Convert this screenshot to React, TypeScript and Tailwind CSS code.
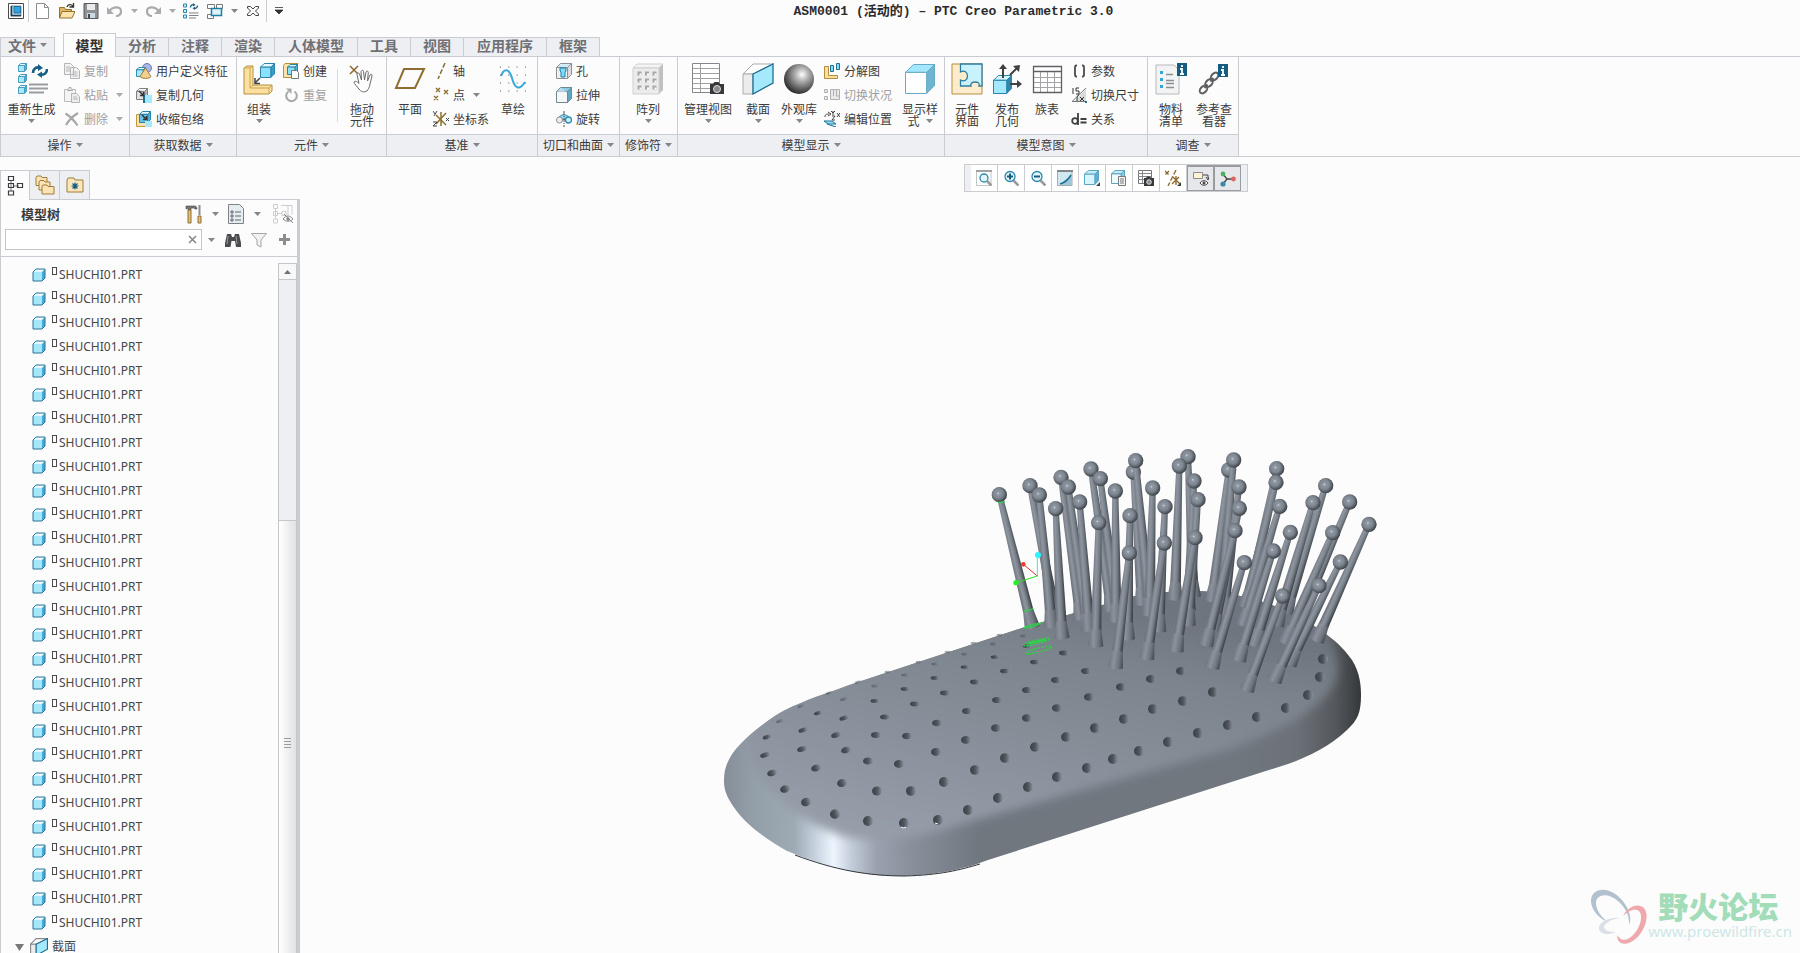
import React from 'react';

interface IconProps {
  size?: number;
  box?: number;
  children: React.ReactNode;
}

const Icon: React.FC<IconProps> = ({ size = 16, box, children }) => (
  <svg width={size} height={size} viewBox={`0 0 ${box ?? size} ${box ?? size}`} fill="none" aria-hidden="true" className="shrink-0">
    {children}
  </svg>
);

const Caret: React.FC<{ color?: string }> = ({ color = '#85868a' }) => (
  <svg width="7" height="4" viewBox="0 0 7 4" aria-hidden="true" className="shrink-0">
    <path d="M0 0h7L3.5 4z" fill={color} />
  </svg>
);

interface CubeProps {
  x?: number;
  y?: number;
  s?: number;
  front?: string;
  top?: string;
  side?: string;
  line?: string;
}

// A small isometric box, s is its outer size
const Cube: React.FC<CubeProps> = ({ x = 0, y = 0, s = 16, front = '#a8e8ff', top = '#e4f8ff', side = '#4fb0da', line = '#2a84aa' }) => {
  const d = s * 0.28;
  return (
    <g stroke={line} strokeWidth="1" strokeLinejoin="round" transform={`translate(${x} ${y})`}>
      <path d={`M.5 ${d}L${d} .5H${s - 0.5}L${s - d} ${d}z`} fill={top} />
      <path d={`M${s - d} ${d}L${s - 0.5} .5V${s - d}L${s - d} ${s - 0.5}z`} fill={side} />
      <path d={`M.5 ${d}H${s - d}V${s - 0.5}H.5z`} fill={front} />
    </g>
  );
};

const CycleArrows = () => (
  <g stroke="#176085" strokeWidth="2.6" fill="none">
    <path d="M2 9c0-4 3-6 6-5.500" />
    <path d="M16 5c0 4-3 6-6 5.500" />
    <path d="M7 0l5 4-5 3zM11 14l-5-3.500 5-3z" fill="#176085" stroke="none" />
  </g>
);

const icons = {
  regenerate: (
    <Icon size={32}>
      <Cube x={2} y={0} s={9} line="#4a9dbd" />
      <Cube x={2} y={11} s={9} line="#4a9dbd" />
      <Cube x={2} y={22} s={9} line="#4a9dbd" />
      <g transform="translate(15 1)"><CycleArrows /></g>
      <path d="M13 21.500h19M13 25.500h19M13 29.500h15" stroke="#9a9b9d" strokeWidth="2" />
    </Icon>
  ),
  copy: (
    <Icon>
      <path d="M.5.5h6l3 3v8h-9zM6.500 4.500h6l3 3v8h-9z" fill="#f2f2f2" stroke="#b4b5b7" />
      <path d="M2 4h4M2 6h4M2 8h4M8.500 9h5M8.500 11h5M8.500 13h5" stroke="#b4b5b7" />
    </Icon>
  ),
  paste: (
    <Icon>
      <path d="M.5 2.500h11v12H.5z" fill="#f4f4f4" stroke="#b9babc" />
      <path d="M3.500 3.500c0-1.500 1-1 1.500-3h2c.5 2 1.500 1.500 1.500 3z" fill="#e2e2e2" stroke="#a9aaac" />
      <path d="M7.500 6.500h5l3 3v6h-8z" fill="#eee" stroke="#b4b5b7" />
      <path d="M9 10h4M9 12h5" stroke="#b4b5b7" />
    </Icon>
  ),
  remove: (
    <Icon>
      <path d="M1.500 2.500c5 3 8 6 12 12M14 2C9 5 5 9 2 14" stroke="#a6a7a9" strokeWidth="2.200" />
    </Icon>
  ),
  udf: (
    <Icon>
      <circle cx="11" cy="5" r="4.500" fill="#aab5e6" stroke="#6d7ab0" />
      <Cube x={0} y={4} s={10} line="#2f8db3" />
      <path d="M9.500 5l5.500 8.500c-1.500 2.500-9 2.500-11 0z" fill="#f3d08e" stroke="#9c7c3e" />
    </Icon>
  ),
  copyGeom: (
    <Icon>
      <Cube x={0} y={1} s={12} front="#dfe0e2" top="#fff" side="#b5b6b8" line="#7d7e80" />
      <path d="M8 8h8v8H8z" fill="#a8e8ff" />
      <path d="M8 8v8" stroke="#1c6c90" strokeWidth="2" />
      <path d="M3 4l4 4M7.500 5v3.500H4" stroke="#333" strokeWidth="1.500" />
    </Icon>
  ),
  shrinkwrap: (
    <Icon>
      <path d="M.5 3.500h12v12H.5z" fill="#fbe3b0" stroke="#c2983c" />
      <Cube x={3} y={0} s={12} front="#68c2e4" />
      <path d="M9 10h7v6H9z" fill="#a8e8ff" />
      <path d="M6 4l4 4M10.500 5v3.500H7" stroke="#333" strokeWidth="1.500" />
    </Icon>
  ),
  assemble: (
    <Icon size={32}>
      <path d="M1 5l3-2h6v19h19v6l-3 3H1z" fill="#fbe0a0" stroke="#b58f3f" />
      <path d="M1 5h6l3-2M7 5v20h19v6M26 25l3-3M7 25l3-3" stroke="#c9a456" />
      <Cube x={17} y={0} s={15} front="#8be0fb" side="#3a9dc8" />
      <path d="M17 15l-5 5M12 15v5.500h5" stroke="#444" strokeWidth="1.500" />
    </Icon>
  ),
  create: (
    <Icon>
      <path d="M.5 2.500L2 .5h13l-2 2v12H.5z" fill="#fbe3b0" stroke="#b58f3f" />
      <Cube x={4} y={1} s={11} front="#8be0fb" />
      <path d="M8.500 7.500h5l2 2v6h-7z" fill="#fff" stroke="#77787a" />
    </Icon>
  ),
  repeat: (
    <Icon>
      <path d="M11.500 4.500a5.300 5.300 0 1 1-6 0" stroke="#a6a7a9" strokeWidth="2" />
      <path d="M3 1.500h5.500V7z" fill="#a6a7a9" />
    </Icon>
  ),
  drag: (
    <Icon size={32}>
      <path d="M4 3l8 8M12 3l-8 8" stroke="#8a6a2f" strokeWidth="1.500" />
      <path
        d="M13 26c-2-3-5-5-5-7 1-1.500 3-.5 5 1.500l-2-9c0-2 2-2 2.500-.5l2 6-.5-8.500c.5-1.500 2.500-1.500 2.500 0l1 8.500 1.500-8c.5-1.500 2.500-1 2.300.5l-.8 8.500 2.500-6c1-1.500 2.500-.5 2 1l-2 8c-.5 4-2 5-3 7-3 1.500-6 1-8-2z"
        fill="#fff"
        stroke="#6a6a6c"
      />
    </Icon>
  ),
  plane: (
    <Icon size={32}>
      <path d="M10 6h20L21 25H2z" stroke="#8f6d30" strokeWidth="2" />
    </Icon>
  ),
  axis: (
    <Icon>
      <path d="M12 0L5 16" stroke="#8f6d30" strokeWidth="1.500" strokeDasharray="5 2" />
    </Icon>
  ),
  point: (
    <Icon>
      <path d="M3 1l4 4M7 1L3 5M11 3l4 4M15 3l-4 4M1 9l4 4M5 9l-4 4" stroke="#8f6d30" strokeWidth="1.400" />
    </Icon>
  ),
  csys: (
    <Icon>
      <path d="M8 1v14M3 13L13 2M3 4l10 10" stroke="#8f6d30" strokeWidth="1.500" />
      <path d="M0 0l2 3M4 0L1 5M0 11h4l-4 4h4M13 7l3 3M16 7l-3 3" stroke="#444" />
    </Icon>
  ),
  sketch: (
    <Icon size={32}>
      <path d="M3 4h26M3 12h26M3 20h26M3 28h26" stroke="#555" strokeDasharray="1 7.300" />
      <path d="M4 13c3-8 8-8 11 2 3 12 8 12 13 4" stroke="#36a8da" strokeWidth="2" />
    </Icon>
  ),
  hole: (
    <Icon>
      <Cube x={0} y={0} s={16} front="#f0f0f1" top="#d5ecf4" side="#dcdddf" line="#8c9094" />
      <path d="M4 5h6v3l-1 1v5H5V9L4 8z" fill="#7fdcfb" stroke="#1d7fa8" />
    </Icon>
  ),
  extrude: (
    <Icon>
      <Cube x={0} y={0} s={16} front="#f6f6f7" top="#8ccbe3" side="#5fa9c6" line="#6f8893" />
      <path d="M5 .5L10.500 5h-10z" fill="#c7e6f2" opacity=".7" />
    </Icon>
  ),
  revolve: (
    <Icon>
      <path d="M3 6c3-3 7-3 10 0v4c-3-2-7-2-10 0z" fill="#8fd4ec" stroke="#3b8dad" />
      <circle cx="3.500" cy="9" r="3" fill="#eee" stroke="#8c9094" />
      <circle cx="12.500" cy="9" r="3" fill="#c6effc" stroke="#2a8db5" strokeWidth="1.300" />
      <path d="M8 0v16" stroke="#555" strokeDasharray="4 1 1 1" />
    </Icon>
  ),
  pattern: (
    <Icon size={32}>
      <path d="M1 5l4-4h26l-4 4z" fill="#f4f4f4" stroke="#d0d0d0" />
      <path d="M27 5l4-4v26l-4 4z" fill="#bfc0c2" />
      <path d="M1 5h26v26H1z" fill="#ececed" stroke="#cfcfd1" />
      <path d="M5.500 10.500h4m3.500 0h4m3.500 0h4M5.500 17.500h4m3.500 0h4m3.500 0h4M5.500 24.500h4m3.500 0h4m3.500 0h4" stroke="#a6a7a9" strokeWidth="4" />
      <path d="M7.500 11.500h2m5.500 0h2m5.500 0h2M7.500 18.500h2m5.500 0h2m5.500 0h2M7.500 25.500h2m5.500 0h2m5.500 0h2" stroke="#fff" strokeWidth="2" />
    </Icon>
  ),
  manageViews: (
    <Icon size={32}>
      <path d="M.5.5h27v29H.5z" fill="#fff" stroke="#85868a" />
      <path d="M1 5.500h26M1 10.500h26M1 15.500h26M1 20.500h26M1 25.500h26M8.500 1v28" stroke="#a0a1a4" />
      <path d="M18 21h3l1.500-2h4l1.500 2h4v10H18z" fill="#37383a" />
      <circle cx="25" cy="26" r="3.500" fill="#8a8b8e" stroke="#ddd" />
    </Icon>
  ),
  section: (
    <Icon size={32}>
      <path d="M1 11L11 1h20L11 11z" fill="#fff" stroke="#aaabad" />
      <path d="M1 11h10v20H1z" fill="#ececed" stroke="#aaabad" />
      <path d="M11 11L31 1v19L11 31z" fill="#a5e9fd" stroke="#1f6f92" strokeWidth="1.300" />
    </Icon>
  ),
  appearance: (
    <Icon size={32}>
      <circle cx="16" cy="16" r="15" fill="url(#ball)" />
    </Icon>
  ),
  explode: (
    <Icon>
      <path d="M.5 3.500h4v9h9v3H.5z" fill="#fbdf9c" stroke="#b58f3f" />
      <path d="M6.500 2.500h3v6h-3zM12.500.5h3v6h-3z" fill="#7fdcfb" stroke="#1f7094" />
    </Icon>
  ),
  toggleState: (
    <Icon>
      <path d="M.5 2.500h3v3h-3zM.5 9.500h3v3h-3zM6.500 2.500h9v10h-9z" fill="#e9e9ea" stroke="#b0b1b3" />
      <path d="M9.500 3v6M12.500 3v6h3" stroke="#b0b1b3" />
    </Icon>
  ),
  editPosition: (
    <Icon>
      <path d="M1 6c0-3 2-3 4-3M4 1l3 2-3 2M9 0v4M7 0l2 2 2-2M8 5h3L8 9h3M13 2l3 4M16 2l-3 4" stroke="#444" />
      <path d="M0 10h8l4 3H4zM3 13l9 3" fill="#8be0fb" stroke="#1f7094" />
    </Icon>
  ),
  displayStyle: (
    <Icon size={32}>
      <Cube x={1} y={1} s={30} front="#fff" top="#a3e7fd" side="#6fb5d2" line="#68aac6" />
    </Icon>
  ),
  compInterface: (
    <Icon size={32}>
      <path d="M1 1h30v30H1z" fill="#fdeccb" stroke="#b58f3f" />
      <path
        d="M9.500 1H31v22h-3c1-3-1-4-4-4s-5 2-4 4H9.500v-6c4 2 7 0 7-4s-3-6-7-4z"
        fill="#c9f2ff"
        stroke="#2f7d9e"
        strokeWidth="1.300"
      />
    </Icon>
  ),
  publish: (
    <Icon size={32}>
      <Cube x={2} y={12} s={19} front="#a3e9ff" side="#3187ab" top="#d2f4ff" />
      <path d="M12 15V4M19 12l7-7M19 21h9" stroke="#414143" strokeWidth="2" />
      <path d="M8 6l4-5 4 5zM22 3l7-1-1 7zM26 17l5 4-5 4z" fill="#414143" />
    </Icon>
  ),
  familyTable: (
    <Icon size={32}>
      <path d="M2.500 3.500h28v26h-28z" fill="#fff" />
      <path d="M9.500 9v20M16.500 9v20M23.500 9v20M2 14.500h28M2 19.500h28M2 24.500h28" stroke="#a3a4a7" />
      <path d="M2.500 3.500h28v26h-28zM2 8.500h28" stroke="#5f6063" strokeWidth="1.300" />
    </Icon>
  ),
  params: (
    <Icon>
      <path d="M6 2.500C3.500 2.500 4 3.500 4 8s-.5 5.500 2 5.500M11 2.500c2.500 0 2 1 2 5.500s.5 5.500-2 5.500" stroke="#4a4a4c" strokeWidth="1.800" />
    </Icon>
  ),
  switchDims: (
    <Icon>
      <path d="M3 14.500L15 2v12.500z" fill="#d9dadc" />
      <path d="M15 1L1 14.500h13" stroke="#77787a" />
      <path d="M2 1v6M8 1H5v3h3v3H5M8 8c-2 0-2 3-2 6M9 10l4 4M13 10l-4 4" stroke="#333" />
      <path d="M14 14h2v2h-2z" fill="#1f6f92" />
    </Icon>
  ),
  relations: (
    <Icon>
      <circle cx="4" cy="10" r="2.800" stroke="#3f3f41" strokeWidth="1.800" />
      <path d="M7 2v12M9.500 8h6M9.500 11.500h6" stroke="#3f3f41" strokeWidth="1.800" />
    </Icon>
  ),
  bom: (
    <Icon size={32}>
      <path d="M1 2h18l5 5v24H1z" fill="#f2f3f4" stroke="#b7b8ba" />
      <path d="M5 8h3v3H5zM5 15h3v3H5zM5 22h3v3H5z" fill="#35a5d5" />
      <path d="M11 11.500h7M11 17.500h8M11 20.500h8M11 24.500h8" stroke="#8d8e91" strokeWidth="1.300" />
      <path d="M22 0h10v13H22z" fill="#145d80" />
      <path d="M27 2v2M25 6h2v5M25 11h4" stroke="#fff" strokeWidth="1.800" />
    </Icon>
  ),
  refViewer: (
    <Icon size={32}>
      <g stroke="#5e5f62" strokeWidth="2">
        <ellipse cx="5.500" cy="26.500" rx="4.500" ry="3" transform="rotate(-48 5.500 26.500)" />
        <ellipse cx="11" cy="20" rx="4.500" ry="3" transform="rotate(-48 11 20)" />
        <ellipse cx="16.500" cy="13.500" rx="4.500" ry="3" transform="rotate(-48 16.500 13.500)" />
        <path d="M6.500 25l3-3.500M12.500 18.500l3-3.500" />
      </g>
      <path d="M20 1h10v13H20z" fill="#145d80" />
      <path d="M25 3v2M23 7h2v5M23 12h4" stroke="#fff" strokeWidth="1.800" />
    </Icon>
  ),
};

interface ToolProps {
  icon: React.ReactNode;
  label: string;
  className?: string;
  caret?: boolean;
  disabled?: boolean;
}

const BigTool: React.FC<ToolProps & { second?: string }> = ({ icon, label, second, className = '', caret }) => (
  <button type="button" className={`flex shrink-0 flex-col items-center pt-1.5 ${className}`}>
    {icon}
    <span className="mt-2 leading-3 whitespace-nowrap">{label}</span>
    {second ? (
      <span className="flex items-center gap-1.5 leading-3 whitespace-nowrap">
        {second}
        {caret && <Caret />}
      </span>
    ) : (
      caret && <span className="mt-1"><Caret /></span>
    )}
  </button>
);

const SmallTool: React.FC<ToolProps> = ({ icon, label, caret, disabled }) => (
  <button type="button" disabled={disabled} className="flex h-6 items-center gap-1 whitespace-nowrap disabled:text-[#9fa0a2]">
    {icon}
    {label}
    {caret && <span className="ml-1"><Caret color={disabled ? '#a9aaac' : '#85868a'} /></span>}
  </button>
);

const SmallColumn: React.FC<{ className?: string; children: React.ReactNode }> = ({ className = '', children }) => (
  <div className={`flex shrink-0 flex-col pt-0.5 ${className}`}>{children}</div>
);

const Group: React.FC<{ label: string; className: string; children: React.ReactNode }> = ({ label, className, children }) => (
  <section aria-label={label} className={`flex shrink-0 flex-col border-r border-[#c9ccd0] ${className}`}>
    <div className="flex h-[77px]">{children}</div>
    <button type="button" className="flex h-[22px] items-center justify-center gap-1 border-t border-[#c9ccd0] bg-[#eeeff2] pb-0.5 whitespace-nowrap">
      {label}
      <Caret />
    </button>
  </section>
);

const tabs = ['分析', '注释', '渲染', '人体模型', '工具', '视图', '应用程序', '框架'];

const QuickButton: React.FC<{ label: string; className?: string; children: React.ReactNode }> = ({ label, className = 'w-6', children }) => (
  <button type="button" aria-label={label} className={`flex h-5 shrink-0 items-center justify-center ${className}`}>
    {children}
  </button>
);

const TitleBar = () => (
  <header className="flex h-[33px] shrink-0 items-start">
    <div className="flex h-[22px] items-center pl-2">
      <Icon>
        <path d="M.5.5h15v15H.5z" fill="#fff" stroke="#4a4a4c" />
        <path d="M3 3h10v10H3z" fill="#c4dbe6" stroke="#4a4a4c" strokeWidth=".6" />
        <path d="M3.500 3v9.500H13" stroke="#17415a" strokeWidth="1.500" />
        <path d="M6 3.500h6.500v6.500H6z" fill="#2fa4e4" stroke="#1c6fa0" />
      </Icon>
      <span className="ml-1 h-full w-px bg-[#c9ccd0]" />
      <span className="w-0.5" />
      <QuickButton label="新建">
        <Icon>
          <path d="M1.500.5h8l4 4v11h-12z" fill="#fff" stroke="#8c8d90" />
          <path d="M9.500.5v4h4" stroke="#8c8d90" />
        </Icon>
      </QuickButton>
      <QuickButton label="打开">
        <Icon>
          <path d="M.5 4.500h5l1 2h6v8H.5z" fill="#e0b765" stroke="#94712c" />
          <path d="M3 8.500h13l-3 6.500H.5z" fill="#fbe3ab" stroke="#94712c" />
          <path d="M8 4c1-3 4-3 6-1M14.500 0v4h-4" stroke="#333" strokeWidth="1.300" />
        </Icon>
      </QuickButton>
      <QuickButton label="保存">
        <Icon>
          <path d="M1 .5h14v15H1z" fill="#8f9093" stroke="#58595c" />
          <path d="M4 1h8v6H4z" fill="#e9eaeb" />
          <path d="M4 10h8v5H4z" fill="#c9dbe2" />
          <path d="M5 11h2v4H5z" fill="#454648" />
        </Icon>
      </QuickButton>
      <QuickButton label="撤消">
        <Icon>
          <path d="M2 9c3-6 12-6 12-1 0 3-2 5-5 5" stroke="#a9aaac" strokeWidth="2.200" />
          <path d="M0 4v7h7z" fill="#a9aaac" />
        </Icon>
      </QuickButton>
      <QuickButton label="撤消列表" className="w-3.5"><Caret color="#a9aaac" /></QuickButton>
      <QuickButton label="重做">
        <Icon>
          <path d="M14 9C11 3 2 3 2 8c0 3 2 5 5 5" stroke="#a9aaac" strokeWidth="2.200" />
          <path d="M16 4v7H9z" fill="#a9aaac" />
        </Icon>
      </QuickButton>
      <QuickButton label="重做列表" className="w-3.5"><Caret color="#a9aaac" /></QuickButton>
      <QuickButton label="重新生成">
        <Icon size={16} box={32}>
          <path d="M1 2h6v6H1zM1 13h6v6H1zM1 24h6v6H1z" fill="#d5f2fc" stroke="#2a84aa" strokeWidth="2" />
          <g transform="translate(13 0)"><CycleArrows /></g>
          <path d="M12 20h19M12 25h19M12 30h14" stroke="#808184" strokeWidth="2" />
        </Icon>
      </QuickButton>
      <QuickButton label="窗口">
        <Icon>
          <path d="M.5 1.500h7v4h-7zM9.500 1.500h6v4h-6zM.5 11.500h6v4h-6z" fill="#fff" stroke="#77787a" />
          <path d="M4.500 5.500h10v7h-10z" fill="#dcf5fd" stroke="#1f7ea5" strokeWidth="1.500" />
        </Icon>
      </QuickButton>
      <QuickButton label="窗口列表" className="w-3.5"><Caret /></QuickButton>
      <QuickButton label="关闭窗口">
        <Icon size={12}>
          <path d="M.5 1.500h3L6 4l2.500-2.500h3v1.500L8.500 6l3 3v1.500h-3L6 8l-2.500 2.500h-3V9l3-3-3-3z" stroke="#444" />
        </Icon>
      </QuickButton>
      <span className="ml-px h-full w-px bg-[#c9ccd0]" />
      <QuickButton label="自定义快速访问工具栏">
        <Icon size={8}>
          <path d="M0 .5h8M0 3h8L4 7z" fill="#333" stroke="#333" strokeWidth=".8" />
        </Icon>
      </QuickButton>
    </div>
    <h1 className="flex-1 pt-1 pr-46 text-center font-['Liberation_Mono','Noto_Sans_CJK_SC',monospace] text-[13px] leading-4 font-bold whitespace-nowrap text-[#2b2b2d]">
      ASM0001 (活动的) – PTC Creo Parametric 3.0
    </h1>
  </header>
);

const RibbonTabs = () => (
  <nav className="relative z-10 -mb-px flex h-6 shrink-0 items-end text-sm font-bold text-[#6f7074]">
    <button type="button" className="flex h-5 w-[55px] items-center justify-center gap-1 border border-[#c9ccd0] bg-[#eeeff2] pb-1">
      文件
      <Caret />
    </button>
    <button type="button" className="ml-2 flex h-6 w-[53px] items-center justify-center border border-b-0 border-[#c9ccd0] bg-[#fcfcfc] pb-0.5 text-[#333335]">
      模型
    </button>
    {tabs.map((tab) => (
      <button
        key={tab}
        type="button"
        className={`flex h-5 items-center justify-center border border-l-0 border-[#c9ccd0] bg-[#eeeff2] pb-1 whitespace-nowrap ${
          tab.length > 2 ? 'w-[83px]' : 'w-[53px]'
        }`}
      >
        {tab}
      </button>
    ))}
  </nav>
);

const Ribbon = () => (
  <div className="flex shrink-0 overflow-hidden border-y border-l border-[#c9ccd0]">
    <Group label="操作" className="w-[129px]">
      <BigTool icon={icons.regenerate} label="重新生成" caret className="w-[61px]" />
      <SmallColumn className="pl-0.5">
        <SmallTool icon={icons.copy} label="复制" disabled />
        <SmallTool icon={icons.paste} label="粘贴" caret disabled />
        <SmallTool icon={icons.remove} label="删除" caret disabled />
      </SmallColumn>
    </Group>
    <Group label="获取数据" className="w-[107px]">
      <SmallColumn className="pl-1.5">
        <SmallTool icon={icons.udf} label="用户定义特征" />
        <SmallTool icon={icons.copyGeom} label="复制几何" />
        <SmallTool icon={icons.shrinkwrap} label="收缩包络" />
      </SmallColumn>
    </Group>
    <Group label="元件" className="w-[150px]">
      <BigTool icon={icons.assemble} label="组装" caret className="w-11" />
      <SmallColumn className="w-14 pl-0.5">
        <SmallTool icon={icons.create} label="创建" />
        <SmallTool icon={icons.repeat} label="重复" disabled />
      </SmallColumn>
      <span className="my-3 w-px bg-[#d9dbde]" />
      <BigTool icon={icons.drag} label="拖动" second="元件" className="w-12" />
    </Group>
    <Group label="基准" className="w-[151px]">
      <BigTool icon={icons.plane} label="平面" className="w-[46px]" />
      <SmallColumn className="w-14">
        <SmallTool icon={icons.axis} label="轴" />
        <SmallTool icon={icons.point} label="点" caret />
        <SmallTool icon={icons.csys} label="坐标系" />
      </SmallColumn>
      <BigTool icon={icons.sketch} label="草绘" className="w-12" />
    </Group>
    <Group label="切口和曲面" className="w-[82px]">
      <SmallColumn className="pl-[18px]">
        <SmallTool icon={icons.hole} label="孔" />
        <SmallTool icon={icons.extrude} label="拉伸" />
        <SmallTool icon={icons.revolve} label="旋转" />
      </SmallColumn>
    </Group>
    <Group label="修饰符" className="w-[58px]">
      <BigTool icon={icons.pattern} label="阵列" caret className="w-14" />
    </Group>
    <Group label="模型显示" className="w-[267px]">
      <BigTool icon={icons.manageViews} label="管理视图" caret className="w-[60px]" />
      <BigTool icon={icons.section} label="截面" caret className="w-10" />
      <BigTool icon={icons.appearance} label="外观库" caret className="w-[42px]" />
      <SmallColumn className="w-[76px] pl-1">
        <SmallTool icon={icons.explode} label="分解图" />
        <SmallTool icon={icons.toggleState} label="切换状况" disabled />
        <SmallTool icon={icons.editPosition} label="编辑位置" />
      </SmallColumn>
      <BigTool icon={icons.displayStyle} label="显示样" second="式" caret className="w-12" />
    </Group>
    <Group label="模型意图" className="w-[203px]">
      <BigTool icon={icons.compInterface} label="元件" second="界面" className="w-11" />
      <BigTool icon={icons.publish} label="发布" second="几何" className="w-9" />
      <BigTool icon={icons.familyTable} label="族表" className="w-11" />
      <SmallColumn className="pl-0.5">
        <SmallTool icon={icons.params} label="参数" />
        <SmallTool icon={icons.switchDims} label="切换尺寸" />
        <SmallTool icon={icons.relations} label="关系" />
      </SmallColumn>
    </Group>
    <Group label="调查" className="w-[91px]">
      <BigTool icon={icons.bom} label="物料" second="清单" className="w-[46px]" />
      <BigTool icon={icons.refViewer} label="参考查" second="看器" className="w-10" />
    </Group>
  </div>
);

const parts = Array.from({ length: 28 }, (_, i) => ({ id: i, name: 'SHUCHI01.PRT' }));

const ModelTree = () => (
  <aside className="flex w-[300px] shrink-0 flex-col pt-[13px]">
    <div className="relative z-10 -mb-px flex h-[30px] shrink-0">
      <button type="button" aria-label="模型树" className="flex w-[30px] items-center justify-center border border-b-0 border-[#c9ccd0] bg-[#fcfcfc]">
        <Icon size={20}>
          <path d="M6 5v10M9 10h5" stroke="#77787a" />
          <path d="M3.500.5h5v4h-5zM3.500 7.500h5v4h-5zM3.500 15h5v4h-5zM12.500 7.500h5v4h-5z" stroke="#3c3c3e" strokeWidth="1.200" />
        </Icon>
      </button>
      <button type="button" aria-label="文件夹浏览器" className="flex w-[30px] items-center justify-center border-y border-r border-[#c9ccd0] bg-[#eeeff2]">
        <Icon size={20}>
          <g fill="#fbe3b4" stroke="#a07d3a">
            <path d="M1 2.500l1-1.500h4l1 1.500h5v8H1z" />
            <path d="M4 7l1-1.500h4L10 7h5v8H4z" />
            <path d="M7 11.500L8 10h4l1 1.500h6v7.500H7z" />
          </g>
        </Icon>
      </button>
      <button type="button" aria-label="收藏夹" className="flex w-[30px] items-center justify-center border-y border-r border-[#c9ccd0] bg-[#eeeff2]">
        <Icon size={18}>
          <path d="M1 4l1-2h6l1 2h8v12H1z" fill="#fbe6bd" stroke="#a07d3a" />
          <path d="M9 6.500v7M5.500 10h7M6.500 7.500l5 5M11.500 7.500l-5 5" stroke="#155d80" strokeWidth="1.200" />
        </Icon>
      </button>
    </div>
    <div className="flex min-h-0 flex-1 flex-col border-t border-r-[3px] border-l border-[#c9ccd0]">
      <div className="flex h-[29px] shrink-0 items-center pr-1 pb-0.5 pl-5">
        <h2 className="flex-1 text-[13px] font-bold">模型树</h2>
        <button type="button" aria-label="设置" className="flex items-center gap-2">
          <Icon size={20}>
            <path d="M2 2h9c1 0 2 1 2 3h-2l-1-1H7v2H4V4L2 5z" fill="#77787a" stroke="#444" strokeWidth=".6" />
            <path d="M4 6h3v13H4z" fill="#e6bf78" stroke="#8f6d30" />
            <path d="M15.500 1v10" stroke="#8c8d90" strokeWidth="2" />
            <path d="M14 12h3v7h-3z" fill="#e6bf78" stroke="#8f6d30" />
          </Icon>
          <Caret />
        </button>
        <button type="button" aria-label="显示" className="ml-[7px] flex items-center gap-2">
          <Icon size={20}>
            <path d="M2.500.5h11l4 4v15h-15z" fill="#e3edf2" stroke="#7e8286" />
            <path d="M5 7h2v2H5zM5 11h2v2H5zM5 15h2v2H5zM9 8h6M9 12h6M9 16h6" stroke="#66676a" />
          </Icon>
          <Caret />
        </button>
        <button type="button" aria-label="隐藏项" className="ml-3">
          <Icon size={20}>
            <path d="M.5.5h4v4h-4zM.5 7.500h4v4h-4zM.5 15h4v4h-4zM9 7.500h4v4H9zM2.500 5v10M5 9.500h4M8 1.500h11v9M15 2v9" stroke="#cdcecf" />
            <path d="M10 15c3-4 7-4 10 0-3 3-7 3-10 0zM11 10l9 9" stroke="#85868a" />
            <circle cx="15" cy="15" r="1.800" fill="#85868a" />
          </Icon>
        </button>
      </div>
      <div className="flex h-7 shrink-0 items-start border-b border-[#c9ccd0] pl-1">
        <div className="flex h-[21px] w-[197px] items-center border border-[#c3c5c8] bg-white">
          <input type="text" aria-label="搜索模型树" className="h-full min-w-0 flex-1 px-1 outline-none" />
          <button type="button" aria-label="清除" className="px-1">
            <Icon size={9}>
              <path d="M1 1l7 7M8 1L1 8" stroke="#85868a" strokeWidth="1.500" />
            </Icon>
          </button>
        </div>
        <div className="flex h-[21px] items-center">
          <button type="button" aria-label="搜索选项" className="ml-1.5"><Caret /></button>
          <button type="button" aria-label="查找" className="ml-2.5">
            <Icon>
              <path d="M2 2h4l1 3h2l1-3h4l2 9v4h-5l-1-6H6.500l-1 6H0v-4z" fill="#4a4b4d" />
              <path d="M3 4L2 12M11 4l1 8" stroke="#9b9c9f" />
            </Icon>
          </button>
          <button type="button" aria-label="过滤" className="ml-2.5">
            <Icon>
              <path d="M.5 1.500h15L10 8v7l-4-2V8z" fill="#f1f1f2" stroke="#a5a6a9" />
            </Icon>
          </button>
          <button type="button" aria-label="添加" className="ml-3">
            <Icon size={11}>
              <path d="M5.500 0v11M0 5.500h11" stroke="#8c8d90" strokeWidth="3" />
            </Icon>
          </button>
        </div>
      </div>
      <div className="flex min-h-0 flex-1 pt-1.5">
        <ul className="min-w-0 flex-1 overflow-hidden font-['Noto_Sans','Noto_Sans_CJK_SC',sans-serif] text-xs text-[#47474a]">
          {parts.map((part) => (
            <li key={part.id} className="flex h-6 items-center pl-[31px]">
              <Icon size={14}>
                <path d="M1 4l3-3h9l-3 3z" fill="#e6f9ff" />
                <path d="M10 4l3-3v9l-3 3z" fill="#45a9d8" />
                <path d="M1 4h9v9H1z" fill="#a3e7fd" />
                <path d="M1 4l3-3h9v9l-3 3H1z" stroke="#2b7599" strokeLinejoin="round" />
              </Icon>
              <span className="mb-2 ml-1.5 h-2 w-[5px] border border-[#4a4a4c]" />
              <span className="ml-0.5">{part.name}</span>
            </li>
          ))}
          <li className="flex h-6 items-center pl-3.5">
            <Icon size={9}>
              <path d="M0 1h9L4.500 8z" fill="#77787a" />
            </Icon>
            <span className="ml-1.5">
              <Icon size={18} box={32}>
                <path d="M1 11L11 1h20L11 11z" fill="#fff" stroke="#8a8b8d" strokeWidth="2" />
                <path d="M1 11h10v20H1z" fill="#ececed" stroke="#8a8b8d" strokeWidth="2" />
                <path d="M11 11L31 1v19L11 31z" fill="#a5e9fd" stroke="#1f6f92" strokeWidth="2" />
              </Icon>
            </span>
            <span className="ml-1 leading-3">截面</span>
          </li>
        </ul>
        <div className="flex w-[19px] shrink-0 flex-col border-x border-t border-[#c3c7cc] bg-[#eeeff2]">
          <button type="button" aria-label="向上滚动" className="flex h-4 shrink-0 items-center justify-center border-b border-[#c3c7cc] bg-[#f8f8f9]">
            <span className="rotate-180"><Caret color="#707174" /></span>
          </button>
          <div className="flex-[245]" />
          <div className="flex flex-[428] flex-col items-center justify-center gap-0.5 border-t border-[#c3c7cc] bg-linear-to-r from-white to-[#e2e2e3] pt-3">
            <span className="h-px w-[7px] bg-[#9b9c9f]" />
            <span className="h-px w-[7px] bg-[#9b9c9f]" />
            <span className="h-px w-[7px] bg-[#9b9c9f]" />
            <span className="h-px w-[7px] bg-[#9b9c9f]" />
          </div>
        </div>
      </div>
    </div>
  </aside>
);

const magnifier = (
  <>
    <circle cx="7" cy="6.500" r="5" fill="#e4f6fd" stroke="#2b87ad" strokeWidth="1.300" />
    <path d="M10.500 10.500l5 5" stroke="#98999c" strokeWidth="2.600" />
  </>
);

const moreMark = <path d="M16 12v4h-4z" fill="#444" />;

const viewTools = [
  {
    label: '重新调整',
    icon: (
      <>
        <path d="M.5 1v14.500H15V1z" fill="#fff" stroke="#c3c4c6" />
        <path d="M0 1h16" stroke="#a0a1a4" strokeWidth="2" />
        <circle cx="8" cy="8" r="4" fill="#e4f6fd" stroke="#2b87ad" strokeWidth="1.300" />
        <path d="M11 11l4.500 4.500" stroke="#98999c" strokeWidth="2.600" />
      </>
    ),
  },
  { label: '放大', icon: <>{magnifier}<path d="M4 6.500h6M7 3.500v6" stroke="#155d80" strokeWidth="2" /></> },
  { label: '缩小', icon: <>{magnifier}<path d="M4 6.500h6" stroke="#155d80" strokeWidth="2" /></> },
  {
    label: '重画',
    icon: (
      <>
        <path d="M.5 1v14.500H15V1z" fill="#cfe8f2" stroke="#a9aaac" />
        <path d="M0 1h16" stroke="#85868a" strokeWidth="2" />
        <path d="M15 4v11H4C6 10 11 9 15 4z" fill="#9cc9dc" />
        <path d="M3 14c4-1 8-4 11-9" stroke="#1f6f92" strokeWidth="1.500" />
      </>
    ),
  },
  {
    label: '显示样式',
    icon: <><Cube s={15} front="#d9f4fd" top="#c4ebf8" side="#5fb0d0" line="#5aa5c4" />{moreMark}</>,
  },
  {
    label: '已保存方向',
    icon: (
      <>
        <Cube s={14} front="#f0fbfe" top="#c4ebf8" side="#8cc9df" line="#5aa5c4" />
        <path d="M7.500 6.500h7v9h-7z" fill="#f4f4f5" stroke="#77787a" />
        <path d="M9 9h4M9 11h4M9 13h4" stroke="#77787a" />
      </>
    ),
  },
  {
    label: '视图管理器',
    icon: (
      <>
        <path d="M.5.500h13v13H.5z" fill="#fff" stroke="#77787a" />
        <path d="M0 3.500h13M0 6.500h13M0 9.500h13M4.500 0v13" stroke="#85868a" />
        <path d="M6 8h2l1-1.500h3L13 8h3v8H6z" fill="#37383a" />
        <circle cx="11" cy="12" r="2.300" fill="#8a8b8e" stroke="#ddd" />
      </>
    ),
  },
  {
    label: '基准显示过滤器',
    icon: (
      <>
        <path d="M0 1l4 4M4 1L0 5M11 0L3 16" stroke="#8f6d30" strokeWidth="1.400" strokeDasharray="5 2" />
        <path d="M11 6v9M7 14l7-7M8 7l7 7" stroke="#8f6d30" strokeWidth="1.400" />
        {moreMark}
      </>
    ),
  },
  {
    label: '注释显示',
    active: true,
    icon: (
      <>
        <path d="M.5 1.500h9v6h-9z" fill="#fdf3d0" stroke="#8c8d90" />
        <path d="M10 4h5v3M13 6l2 3 1-3" stroke="#444" />
        <path d="M7 12c2-3 6-3 8 0-2 3-6 3-8 0z" fill="#fff" stroke="#444" />
        <circle cx="11" cy="12" r="1.500" fill="#444" />
      </>
    ),
  },
  {
    label: '旋转中心',
    active: true,
    icon: (
      <>
        <path d="M3 3l4 5h6M7 8l-4 5" stroke="#444" strokeWidth="1.300" />
        <circle cx="3" cy="3" r="2.400" fill="#4cad63" />
        <circle cx="13.500" cy="8" r="2.400" fill="#e06464" />
        <circle cx="3" cy="13" r="2.600" fill="#3c87a8" />
      </>
    ),
  },
];

const ViewToolbar = () => (
  <div className="flex border border-[#c9ccd0] bg-[#eeeff2] px-1.5">
    {viewTools.map((tool) => (
      <button
        key={tool.label}
        type="button"
        aria-label={tool.label}
        className={
          tool.active
            ? 'flex h-[26px] w-[27px] items-center justify-center border border-t-2 border-[#9a9b9e] bg-[#e6e7ea]'
            : 'flex h-[26px] w-[27px] items-center justify-center border-r border-[#c9ccd0] bg-white'
        }
      >
        <Icon>{tool.icon}</Icon>
      </button>
    ))}
  </div>
);

// Hole centres on the top face of the brush body
const holes = [
  [904, 823], [938, 820], [968, 810], [998, 798], [1028, 787], [1057, 777], [1087, 768], [1113, 759], [1139, 751],
  [1168, 742], [1198, 733], [1228, 725], [1257, 717], [1286, 708], [1308, 695], [1320, 677], [1323, 659],
  [868, 821], [835, 814], [806, 802], [785, 789], [772, 773], [765, 755], [767, 737], [780, 721], [801, 706],
  [829, 693], [858, 682], [888, 672], [919, 662], [948, 652], [974, 643], [1000, 635],
  [877, 791], [911, 791], [944, 782], [975, 770], [1005, 758], [1035, 747], [1066, 737], [1095, 728], [1124, 719],
  [1153, 709], [1183, 701], [1213, 692],
  [842, 783], [816, 768], [802, 749], [803, 730], [818, 713], [844, 699], [875, 686], [905, 675], [935, 664],
  [965, 654], [994, 644], [1024, 636],
  [899, 764], [868, 761], [846, 750], [836, 735], [844, 718], [875, 701], [905, 689], [935, 678], [965, 667],
  [995, 657], [1027, 646],
  [936, 752], [966, 740], [996, 728], [1027, 718], [1057, 708], [1089, 697], [1121, 687], [1151, 679], [1181, 671],
  [907, 736], [876, 735], [885, 717], [915, 704], [945, 693], [975, 682], [1005, 671], [1035, 662], [1064, 653],
  [937, 723], [967, 711], [997, 700], [1027, 690], [1056, 680], [1086, 671],
];

// Bristles as [head x, head y, foot x, foot y], in thirds of a scene unit
const bristles = [
  [684, 50, 700, 470], [821, 60, 785, 490], [527, 62, 570, 520], [393, 87, 455, 512], [303, 112, 363, 536],
  [210, 137, 290, 545], [118, 164, 217, 562], [950, 86, 865, 490], [1097, 137, 978, 518], [1169, 186, 1010, 560],
  [1227, 253, 1070, 602], [238, 165, 275, 560], [325, 141, 385, 570], [421, 116, 475, 542], [520, 96, 547, 492],
  [658, 78, 645, 477], [806, 90, 757, 482], [948, 127, 857, 500], [1059, 188, 950, 555], [1118, 278, 976, 608],
  [1141, 366, 988, 672], [1077, 437, 943, 722], [968, 468, 860, 750], [853, 368, 756, 682], [940, 333, 836, 660],
  [991, 277, 883, 616], [959, 199, 850, 555], [825, 272, 738, 615], [838, 205, 760, 570], [837, 141, 790, 520],
  [705, 293, 648, 632], [714, 179, 684, 555], [702, 123, 685, 510], [613, 309, 560, 656], [615, 200, 596, 573],
  [578, 144, 568, 525], [508, 339, 466, 683], [510, 227, 502, 597], [466, 153, 468, 543], [416, 248, 407, 618],
  [359, 186, 388, 570], [287, 206, 306, 594],
].sort((a, b) => a[3] - b[3]);

const Bristle: React.FC<{ from: number[] }> = ({ from: [hx, hy, fx, fy] }) => {
  const len = Math.hypot(fx - hx, fy - hy);
  const angle = (Math.atan2(hx - fx, fy - hy) * 180) / Math.PI;
  return (
    <g>
      <g transform={`translate(${hx} ${hy}) rotate(${angle})`}>
        <path d={`M-9 0H9L16 ${len - 48}H-16z`} fill="url(#stem)" />
        <path d={`M-16 ${len - 50}H16L23 ${len}Q0 ${len + 10} -23 ${len}z`} fill="url(#cone)" />
      </g>
      <circle cx={hx} cy={hy} r="23" fill="url(#bead)" />
    </g>
  );
};

const outline =
  'M724 780C724 757 740 742 765 723C785 708 800 702 858 682L1025 627L1106 604C1128 596 1160 591 1191 591C1230 591 1260 599 1289 612C1320 628 1340 642 1352 660C1360 673 1361 685 1361 695C1361 712 1358 720 1347 730C1330 746 1310 756 1288 764L988 860C970 867 945 874 905 876C865 877 830 868 787 851C760 836 742 820 733 806C725 794 724 788 724 780z';

const BrushModel = () => (
  <svg viewBox="700 430 700 460" role="img" aria-label="ASM0001" className="h-[460px] w-[700px] shrink-0">
    <defs>
      <linearGradient id="wall" gradientUnits="userSpaceOnUse" x1="724" y1="0" x2="1361" y2="0">
        <stop offset="0" stopColor="#868e99" />
        <stop offset=".05" stopColor="#94a0a9" />
        <stop offset=".11" stopColor="#9da9b3" />
        <stop offset=".14" stopColor="#c3cedb" />
        <stop offset=".172" stopColor="#edf6ff" />
        <stop offset=".2" stopColor="#c3ccd9" />
        <stop offset=".24" stopColor="#9aa1ae" />
        <stop offset=".3" stopColor="#878e99" />
        <stop offset=".4" stopColor="#70777f" />
        <stop offset=".8" stopColor="#70777f" />
        <stop offset=".9" stopColor="#6c7178" />
        <stop offset=".96" stopColor="#54585c" />
        <stop offset="1" stopColor="#35383b" />
      </linearGradient>
      <linearGradient id="face" gradientUnits="userSpaceOnUse" x1="850" y1="840" x2="910" y2="560">
        <stop offset="0" stopColor="#979faa" />
        <stop offset=".25" stopColor="#8f96a2" />
        <stop offset=".5" stopColor="#858d97" />
        <stop offset=".8" stopColor="#7b838c" />
        <stop offset="1" stopColor="#6e757e" />
      </linearGradient>
      <linearGradient id="stem" gradientUnits="userSpaceOnUse" x1="-14" y1="0" x2="14" y2="0">
        <stop offset="0" stopColor="#6d747c" />
        <stop offset=".35" stopColor="#8f96a1" />
        <stop offset=".65" stopColor="#767e87" />
        <stop offset="1" stopColor="#3e4349" />
      </linearGradient>
      <linearGradient id="cone" gradientUnits="userSpaceOnUse" x1="-22" y1="0" x2="22" y2="0">
        <stop offset="0" stopColor="#6f767f" />
        <stop offset=".35" stopColor="#8b929d" />
        <stop offset=".7" stopColor="#6f767f" />
        <stop offset="1" stopColor="#454a50" />
      </linearGradient>
      <linearGradient id="hole">
        <stop offset="0" stopColor="#363b41" />
        <stop offset=".5" stopColor="#4b5158" />
        <stop offset="1" stopColor="#8a929c" />
      </linearGradient>
      <radialGradient id="bead" cx=".42" cy=".42" r=".6">
        <stop offset="0" stopColor="#d9dee6" />
        <stop offset=".14" stopColor="#9199a5" />
        <stop offset=".55" stopColor="#7c848e" />
        <stop offset="1" stopColor="#3b4046" />
      </radialGradient>
      <clipPath id="body"><path d={outline} /></clipPath>
      <filter id="soft" x="-10%" y="-10%" width="120%" height="120%"><feGaussianBlur stdDeviation="5" /></filter>
    </defs>
    <path d={outline} fill="url(#wall)" />
    <g clipPath="url(#body)">
      <path
        d="M757 700C738 750 745 765 768 790C785 808 812 828 848 837C880 842 920 838 955 826L1215 753C1265 738 1300 720 1325 697C1340 680 1342 662 1326 632L1290 560H1000L760 660z"
        fill="url(#face)"
        filter="url(#soft)"
      />
    </g>
    <path d="M795 855C835 870 868 876 905 876C940 875 960 870 980 864" fill="none" stroke="#2f343a" />
    {holes.map(([x, y]) => {
      const depth = y - (627 + (1025 - x) * 0.33);
      return (
        <ellipse
          key={`${x}-${y}`}
          cx={x}
          cy={y}
          rx={Math.min(5, 3.5 + Math.max(0, depth) * 0.04)}
          ry={Math.max(1, Math.min(5, 1.3 + depth * 0.028))}
          fill="url(#hole)"
          opacity={depth < 15 ? 0.45 : 0.95}
          transform={x < 860 ? `rotate(-18 ${x} ${y})` : undefined}
        />
      );
    })}
    <path d="M901 827q3 2 5 0M935 823l3 1" stroke="#fff" fill="none" />
    <g transform="translate(960 440) scale(.33333)">
      {bristles.map((b) => (
        <Bristle key={b.join('-')} from={b} />
      ))}
      <g fill="none" stroke="#2fd048" strokeWidth="4">
        <path d="M114 188l20-3M192 513q15 0 28-7M192 564q10-10 50-14q-15 12-50 14" />
        <ellipse cx="230" cy="606" rx="40" ry="6" transform="rotate(-14 230 606)" strokeDasharray="8 3" />
        <path d="M205 611l52-12" strokeWidth="7" />
        <ellipse cx="236" cy="630" rx="40" ry="6" transform="rotate(-14 236 630)" strokeDasharray="8 3" />
      </g>
      <g strokeWidth="3">
        <path d="M232 408V345" stroke="#2fe9f5" />
        <path d="M232 408L190 373" stroke="#e83030" />
        <path d="M232 408L168 428" stroke="#25e625" />
      </g>
      <circle cx="234" cy="345" r="9" fill="#2ff3ff" />
      <circle cx="190" cy="373" r="7" fill="#f03a3a" />
      <circle cx="168" cy="428" r="8" fill="#25f025" />
    </g>
  </svg>
);

const Watermark = () => (
  <div className="absolute right-2 bottom-2 flex items-center">
    <svg width="58" height="56" viewBox="0 0 58 56" fill="none" aria-hidden="true">
      <path
        d="M1 12C1-1 18-4 31 10c9 10 11 20 8 26 1-8-3-17-11-24C18 3 6 5 6 14c0 7 5 14 13 20C8 29 1 20 1 12z"
        fill="#b3c1cf"
      />
      <path d="M30 29c-9-1-20 3-21 9-1 7 8 9 17 5-7 0-12-2-12-5 1-5 9-8 16-9z" fill="#dbe0e6" />
      <path d="M33 27c4-9 15-14 21-8 7 9-1 28-13 34-8 4-14 1-14-7 4 7 11 6 17-1 7-8 9-19 5-23-4-3-11 0-16 5z" fill="#efa9ad" />
    </svg>
    <div className="flex flex-col">
      <span className="pl-2.5 text-[30px] leading-7 font-black text-[#a2dcb8]">野火论坛</span>
      <span className="font-['Noto_Sans',sans-serif] text-[15px] leading-6 text-[#cde7e8]">www.proewildfire.cn</span>
    </div>
  </div>
);

const App: React.FC = () => (
  <div className="flex h-screen w-full flex-col overflow-hidden bg-[#fcfcfc] font-['Noto_Sans_CJK_SC',sans-serif] text-xs text-[#3b3b3d]">
    <svg width="0" height="0" className="absolute" aria-hidden="true">
      <defs>
        <radialGradient id="ball" cx=".6" cy=".35" r=".65">
          <stop offset="0" stopColor="#fff" />
          <stop offset=".3" stopColor="#b9b9b9" />
          <stop offset=".7" stopColor="#686868" />
          <stop offset="1" stopColor="#2f2f2f" />
        </radialGradient>
      </defs>
    </svg>
    <TitleBar />
    <RibbonTabs />
    <Ribbon />
    <div className="flex min-h-0 flex-1">
      <ModelTree />
      <main className="relative flex min-w-0 flex-1 flex-col items-center overflow-hidden pt-[7px]">
        <div className="pl-28">
          <ViewToolbar />
        </div>
        <div className="pt-[238px]">
          <BrushModel />
        </div>
        <Watermark />
      </main>
    </div>
  </div>
);

export default App;
